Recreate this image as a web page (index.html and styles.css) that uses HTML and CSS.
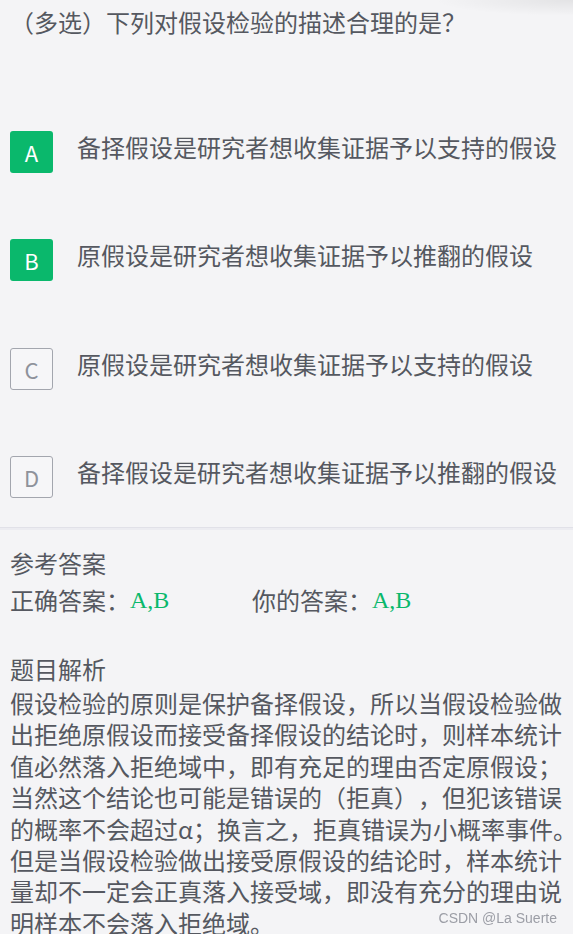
FILE: index.html
```html
<!DOCTYPE html>
<html lang="zh-CN">
<head>
<meta charset="utf-8">
<title>题目</title>
<link rel="stylesheet" href="styles.css">
</head>
<body>
<div class="page">
  <div class="question">（多选）下列对假设检验的描述合理的是？</div>

  <div class="options">
    <div class="option">
      <span class="tag tag-on">A</span>
      <span class="opt-text">备择假设是研究者想收集证据予以支持的假设</span>
    </div>
    <div class="option">
      <span class="tag tag-on">B</span>
      <span class="opt-text">原假设是研究者想收集证据予以推翻的假设</span>
    </div>
    <div class="option">
      <span class="tag tag-off">C</span>
      <span class="opt-text">原假设是研究者想收集证据予以支持的假设</span>
    </div>
    <div class="option">
      <span class="tag tag-off">D</span>
      <span class="opt-text">备择假设是研究者想收集证据予以推翻的假设</span>
    </div>
  </div>

  <div class="answer">
    <div class="sec-title">参考答案</div>
    <div class="answer-row">
      <span class="ans-item">正确答案：<span class="ans-val">A,B</span></span>
      <span class="ans-item">你的答案：<span class="ans-val">A,B</span></span>
    </div>

    <div class="sec-title analysis-title">题目解析</div>
    <div class="analysis">假设检验的原则是保护备择假设，所以当假设检验做<br>出拒绝原假设而接受备择假设的结论时，则样本统计<br>值必然落入拒绝域中，即有充足的理由否定原假设；<br>当然这个结论也可能是错误的（拒真），但犯该错误<br>的概率不会超过α；换言之，拒真错误为小概率事件。<br>但是当假设检验做出接受原假设的结论时，样本统计<br>量却不一定会正真落入接受域，即没有充分的理由说<br>明样本不会落入拒绝域。</div>
  </div>
</div>
<div class="watermark">CSDN @La Suerte</div>
</body>
</html>
```

FILE: styles.css
```css
html, body {
  margin: 0;
  padding: 0;
  background: #f4f4f6;
}

body {
  font-family: "Noto Sans CJK SC", "Noto Sans", sans-serif;
  color: #555860;
  overflow: hidden;
  height: 934px;
  text-spacing-trim: space-all;
}

.page {
  position: relative;
}

.page::before {
  content: "";
  position: absolute;
  top: 0;
  right: 0;
  width: 140px;
  height: 16px;
  background: radial-gradient(ellipse at 100% 0%, rgba(0, 0, 0, 0.07), rgba(0, 0, 0, 0) 70%);
}

.question {
  padding: 6px 10px 0;
  font-size: 24px;
  line-height: 32px;
  white-space: nowrap;
}

.options {
  display: flex;
  flex-direction: column;
  gap: 66.3px;
  padding: 93px 0 29px 10px;
  border-bottom: 1px solid #e1e1e8;
  box-shadow: 0 2px 0 #ececf1;
}

.option {
  display: flex;
  align-items: flex-start;
  gap: 24px;
}

.tag {
  box-sizing: border-box;
  width: 43px;
  height: 42px;
  border-radius: 3px;
  display: flex;
  align-items: center;
  justify-content: center;
  font-size: 22px;
  flex-shrink: 0;
}

.tag-on {
  background: #0ab86c;
  color: #ffffff;
}

.tag-off {
  border: 1px solid #a3a6ae;
  color: #8e929b;
  background: #f6f6f8;
}

.opt-text {
  font-size: 24px;
  line-height: 32px;
  white-space: nowrap;
}

.answer {
  padding: 16px 10px 0;
}

.sec-title {
  font-size: 24px;
  line-height: 37px;
}

.answer-row {
  display: flex;
  font-size: 24px;
  line-height: 37px;
}

.ans-item {
  white-space: nowrap;
}

.ans-item:first-child {
  width: 242px;
}

.ans-val {
  font-family: "Liberation Serif", serif;
  font-size: 24px;
  color: #0ab86c;
  vertical-align: 2px;
}

.analysis-title {
  margin-top: 31px;
}

.analysis {
  font-size: 24px;
  line-height: 31.4px;
  white-space: nowrap;
}

.watermark {
  position: fixed;
  right: 16px;
  top: 910px;
  font-family: "Liberation Sans", Arial, sans-serif;
  font-size: 14px;
  line-height: 16px;
  color: #9c9ea6;
}
```
